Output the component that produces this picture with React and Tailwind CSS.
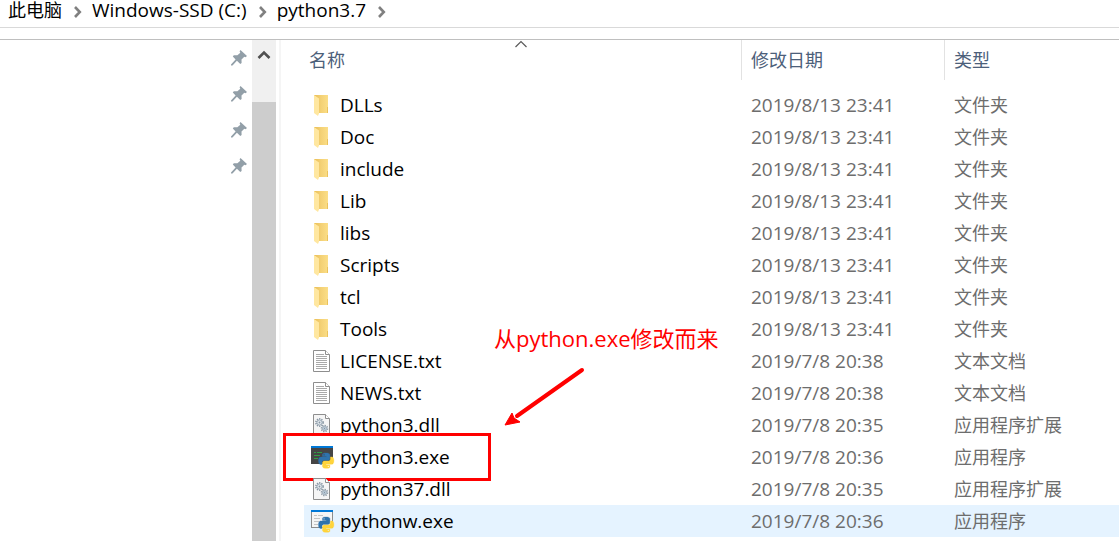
const files = [
  ["DLLs", "2019/8/13 23:41", "文件夹", "folder"],
  ["Doc", "2019/8/13 23:41", "文件夹", "folder"],
  ["include", "2019/8/13 23:41", "文件夹", "folder"],
  ["Lib", "2019/8/13 23:41", "文件夹", "folder"],
  ["libs", "2019/8/13 23:41", "文件夹", "folder"],
  ["Scripts", "2019/8/13 23:41", "文件夹", "folder"],
  ["tcl", "2019/8/13 23:41", "文件夹", "folder"],
  ["Tools", "2019/8/13 23:41", "文件夹", "folder"],
  ["LICENSE.txt", "2019/7/8 20:38", "文本文档", "text"],
  ["NEWS.txt", "2019/7/8 20:38", "文本文档", "text"],
  ["python3.dll", "2019/7/8 20:35", "应用程序扩展", "dll"],
  ["python3.exe", "2019/7/8 20:36", "应用程序", "console"],
  ["python37.dll", "2019/7/8 20:35", "应用程序扩展", "dll"],
  ["pythonw.exe", "2019/7/8 20:36", "应用程序", "window"],
];

const snake =
  "M14.25.18l.9.2.73.26.59.3.45.32.34.34.25.34.16.33.1.3.04.26.02.2-.01.13V8.5l-.05.63-.13.55-.21.46-.26.38-.3.31-.33.25-.35.19-.35.14-.33.1-.3.07-.26.04-.21.02H8.77l-.69.05-.59.14-.5.22-.41.27-.33.32-.27.35-.2.36-.15.37-.1.35-.07.32-.04.27-.02.21v3.06H3.17l-.21-.03-.28-.07-.32-.12-.35-.18-.36-.26-.36-.36-.35-.46-.32-.59-.28-.73-.21-.88-.14-1.05-.05-1.23.06-1.22.16-1.04.24-.87.32-.71.36-.57.4-.44.42-.33.42-.24.4-.16.36-.1.32-.05.24-.01h.16l.06.01h8.16v-.83H6.18l-.01-2.75-.02-.37.05-.34.11-.31.17-.28.25-.26.31-.23.38-.2.44-.18.51-.15.58-.12.64-.1.71-.06.77-.04.84-.02 1.27.05zm-6.3 1.98l-.23.33-.08.41.08.41.23.34.33.22.41.09.41-.09.33-.22.23-.34.08-.41-.08-.41-.23-.33-.33-.22-.41-.09-.41.09z";

function Gear({ x, y, r, fill }) {
  return (
    <g transform={`translate(${x} ${y})`}>
      <circle r={r} fill="none" stroke="#8796a3" strokeWidth="1.6" strokeDasharray="1.3 1" />
      <circle r={r - 1} fill={fill} stroke="#9aa8b4" strokeWidth="1" />
      <circle r="0.9" fill="#8796a3" />
    </g>
  );
}

function FileIcon({ kind }) {
  return (
    <svg className="size-6 shrink-0" viewBox="0 0 24 24" aria-hidden="true">
      {kind === "folder" && (
        <>
          <defs>
            <linearGradient id="fold" x1="0" x2="1">
              <stop offset="0" stopColor="#e9bd55" />
              <stop offset="0.5" stopColor="#f4d175" />
              <stop offset="1" stopColor="#fbde87" />
            </linearGradient>
          </defs>
          <path d="M3 2H17V15.500V20H4z" fill="url(#fold)" />
          <path d="M16 14h1v6h-1z" fill="#eac25c" />
          <path d="M3 2L8 5.500V20.500L7 23L3 20z" fill="#ffe7a0" />
        </>
      )}
      {(kind === "text" || kind === "dll") && (
        <>
          <path d="M2.500 1.500H14.500L18.500 5.500V22.500H2.500z" fill={kind === "dll" ? "#f5f5f5" : "#fff"} stroke="#8e8e8e" />
          <path d="M14.500 1.500V5.500H18.500" fill="#fff" stroke="#8e8e8e" />
        </>
      )}
      {kind === "text" && (
        <path d="M5 5.500H13M5 7.500H16M5 9.500H16M5 11.500H16M5 13.500H16M5 15.500H16M5 17.500H16M5 19.500H16" stroke="#a9a9a9" />
      )}
      {kind === "dll" && (
        <>
          <Gear x={8.5} y={9.5} r={3.6} fill="#e3e9ee" />
          <Gear x={13.5} y={15.5} r={3} fill="#d2e6f5" />
        </>
      )}
      {(kind === "console" || kind === "window") && (
        <>
          <path d="M0 1H22V19H0z" fill={kind === "console" ? "#454545" : "#8c8c8c"} />
          {kind === "window" && <path d="M1 3H21V18H1z" fill="#f5f5f5" />}
          <path d="M0 1H22V3H0z" fill="#0078d7" />
          {kind === "console" ? (
            <path d="M3 7.500H5M6 7.500H11M3 10.500H9M3 13.500H7" stroke="#2f9e44" />
          ) : (
            <path d="M3 6.500H6M7 6.500H12M3 9.500H9M3 12.500H8M3 15.500H7" stroke="#c3c3c3" />
          )}
          <g transform="translate(7.5 8) scale(0.64)">
            <path d={snake} fill="#2f73ad" stroke="#2f73ad" strokeWidth="0.5" />
            <path d={snake} fill="#ffd43b" stroke="#ffd43b" strokeWidth="0.5" transform="rotate(180 12 12)" />
          </g>
        </>
      )}
    </svg>
  );
}

function Chevron() {
  return (
    <svg className="mt-1 size-3 shrink-0" viewBox="0 0 12 12" aria-hidden="true">
      <path d="M3 1L7.800 6L3 11" fill="none" stroke="#808080" strokeWidth="2.600" />
    </svg>
  );
}

function Pin() {
  return (
    <svg className="size-4" viewBox="0 0 16 16" aria-hidden="true">
      <path d="M9.500 0L16 6L14.500 7.300L13.300 6.800L10.500 9.500L10.600 13L9.300 14L5.900 10.800L1.500 15.500H0V14.500L4.600 9.500L1.800 6.500L2.800 5.300H6.400L9.300 2.700L8.600 1.300z" fill="#929fa8" />
    </svg>
  );
}

export default function App() {
  return (
    <div className="min-h-screen bg-white text-lg leading-6 text-black font-['Open_Sans','Noto_Sans_CJK_SC',sans-serif]">
      <nav aria-label="路径" className="flex h-7 items-start gap-2 border-b border-[#d9d9d9] pl-2 whitespace-nowrap">
        {["此电脑", "Windows-SSD (C:)", "python3.7"].map((part) => (
          <div key={part} className="flex items-center gap-2.5">
            <a href="#" className={part === "此电脑" ? "text-lg leading-5" : "text-[19px] leading-5"}>{part}</a>
            <Chevron />
          </div>
        ))}
      </nav>
      <div className="mt-[11px] flex border-t border-[#bfbfbf]">
        <aside className="flex w-[252px] shrink-0 flex-col items-end pr-[5px]">
          {[1, 2, 3, 4].map((n) => (
            <div key={n} className="flex h-9 items-center">
              <Pin />
            </div>
          ))}
        </aside>
        <div className="flex w-6 shrink-0 flex-col bg-[#f0f0f0]">
          <button aria-label="向上滚动" className="flex h-[62px] justify-center pt-2">
            <svg className="h-4 w-4" viewBox="0 0 16 16" aria-hidden="true">
              <path d="M2.500 10L8 4.500L13.500 10" fill="none" stroke="#505050" strokeWidth="2.600" />
            </svg>
          </button>
          <div className="grow bg-[#cdcdcd]" />
        </div>
        <main className="relative ml-[3px] min-w-0 grow border-l-2 border-[#f5f5f5] pb-1 pl-[23px]">
          <table className="w-full table-fixed border-collapse text-left whitespace-nowrap">
            <colgroup>
              <col className="w-[437px]" />
              <col className="w-[203px]" />
              <col />
            </colgroup>
            <thead className="text-[#4c607a]">
              <tr>
                {["名称", "修改日期", "类型"].map((label, i) => (
                  <th key={label} className="pb-[9px] font-normal">
                    <div className={i === 0 ? "relative flex h-10 items-center pl-[5px]" : "flex h-10 items-center border-l border-[#e2e2e2] pl-[9px]"}>
                      <button>{label}</button>
                      {i === 0 && (
                        <svg className="absolute top-0 left-1/2 h-2 w-3 -translate-x-2" viewBox="0 0 12 8" aria-hidden="true">
                          <path d="M0.500 7L6 1.500L11.500 7" fill="none" stroke="#5a5a5a" strokeWidth="1.200" />
                        </svg>
                      )}
                    </div>
                  </th>
                ))}
              </tr>
            </thead>
            <tbody className="text-[#6d6d6d]">
              {files.map(([name, date, type, kind]) => (
                <tr key={name} className={name === "pythonw.exe" ? "h-8 bg-[#e5f3ff]" : "h-8"}>
                  <td className="relative p-0">
                    <div className="flex items-center gap-[5px] pl-[7px]">
                      <FileIcon kind={kind} />
                      <span className="text-[19px] leading-6 text-black">{name}</span>
                    </div>
                    {name === "python3.exe" && (
                      <div className="absolute -top-2 -left-[21px] h-12 w-[208px] border-3 border-[#ff0000]" />
                    )}
                  </td>
                  <td className="p-0 pl-2.5 text-[19px] leading-6">{date}</td>
                  <td className="p-0 pl-2.5">{type}</td>
                </tr>
              ))}
            </tbody>
          </table>
          <div className="absolute top-[282px] left-[213px] text-[#ff0000]">
            <p className="text-[22px] leading-8 whitespace-nowrap">从python.exe修改而来</p>
            <svg className="mt-2 ml-2 h-16 w-24" viewBox="0 0 96 64" aria-hidden="true">
              <path d="M80 8L15 54" stroke="#ff0000" strokeWidth="4" strokeLinecap="round" />
              <path d="M3 63L10 51L12 56L18 60z" fill="#ff0000" stroke="#ff0000" />
            </svg>
          </div>
        </main>
      </div>
    </div>
  );
}
